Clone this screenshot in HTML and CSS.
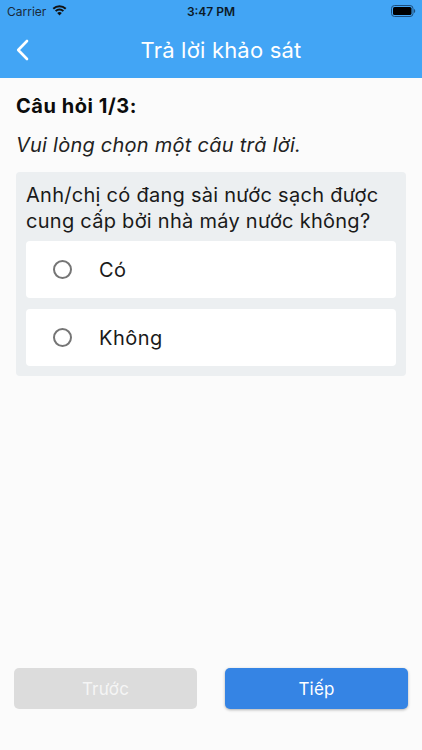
FILE: index.html
```
<!DOCTYPE html>
<html lang="vi">
<head>
<meta charset="utf-8">
<title>Trả lời khảo sát</title>
<link rel="stylesheet" href="styles.css">
</head>
<body>
<div class="app">
  <header class="top">
    <div class="status">
      <div class="status-left">
        <span>Carrier</span>
        <svg class="wifi" viewBox="0 0 16 12" width="15" height="11"><path d="M8 11.500 5.500 8.800a3.500 3.500 0 0 1 5 0Z" fill="#111"/><path d="M3.800 6.700a6 6 0 0 1 8.400 0" fill="none" stroke="#111" stroke-width="2.200"/><path d="M1.200 4a9.800 9.800 0 0 1 13.600 0" fill="none" stroke="#111" stroke-width="2.200"/></svg>
      </div>
      <span class="clock">3:47 PM</span>
      <svg class="battery" viewBox="0 0 25 12" width="25" height="12"><rect x=".5" y=".5" width="21.500" height="11" rx="3" fill="none" stroke="#1d4f7d"/><rect x="2" y="2" width="18.500" height="8" rx="1.600" fill="#000"/><path d="M23 4v4c.8-.2 1.200-1 1.200-2s-.4-1.800-1.200-2Z" fill="#1d4f7d"/></svg>
    </div>
    <div class="nav">
      <svg class="back" viewBox="0 0 14 22" width="14" height="22"><path d="M12 2 3.200 11l8.800 9" fill="none" stroke="#fff" stroke-width="2.600" stroke-linecap="round" stroke-linejoin="round"/></svg>
      <h1>Trả lời khảo sát</h1>
    </div>
  </header>
  <main class="content">
    <h2>Câu hỏi 1/3:</h2>
    <p class="hint">Vui lòng chọn một câu trả lời.</p>
    <section class="card">
      <p class="question">Anh/chị có đang sài nước sạch được cung cấp bởi nhà máy nước không?</p>
      <div class="option"><span class="radio"></span><span>Có</span></div>
      <div class="option"><span class="radio"></span><span>Không</span></div>
    </section>
  </main>
  <footer class="actions">
    <button class="btn prev">Trước</button>
    <button class="btn next">Tiếp</button>
  </footer>
</div>
</body>
</html>
```
FILE: styles.css
```
* { box-sizing: border-box; }
html, body { margin: 0; height: 100%; }
body { font-family: Inter, "Noto Sans", sans-serif; background: #fbfbfb; color: #111; }
.app { width: 422px; height: 750px; display: flex; flex-direction: column; overflow: hidden; }
.top { height: 78px; background: #42a5f5; flex: none; }
.status { height: 22px; padding: 1px 6px 0 7px; display: flex; align-items: center; justify-content: space-between; font-size: 12px; position: relative; }
.status-left { display: flex; align-items: center; gap: 6px; color: #1a2a3a; }
.wifi { margin-top: -2px; }
.clock { position: absolute; left: 0; right: 0; text-align: center; font-weight: 600; color: #0c1a28; }
.battery { position: relative; margin-top: -2px; }
.nav { height: 56px; position: relative; display: flex; align-items: center; justify-content: center; padding-left: 20px; }
.back { position: absolute; left: 14.500px; top: 17px; }
.nav h1 { margin: 0 0 1px; font-size: 22px; font-weight: 400; letter-spacing: .2px; color: #fff; }
.content { flex: 1; padding: 16px 16px 0; }
h2 { margin: 0; font-size: 20px; line-height: 24px; font-weight: 700; letter-spacing: .55px; color: #0c0c0c; }
.hint { margin: 15px 0 0; font-size: 20px; line-height: 24px; font-style: italic; letter-spacing: .24px; color: #222; }
.card { margin-top: 15px; background: #eceff1; border-radius: 4px; padding: 10px; }
.question { margin: 0 0 7px; font-size: 20px; line-height: 26px; letter-spacing: .27px; color: #1a1a1a; }
.option { height: 57px; background: #fff; border-radius: 4px; display: flex; align-items: center; padding-left: 27px; gap: 27px; font-size: 20px; letter-spacing: .5px; color: #1a1a1a; }
.option + .option { margin-top: 11px; }
.radio { width: 19px; height: 19px; border: 2px solid #757575; border-radius: 50%; flex: none; }
.actions { flex: none; height: 82px; padding: 0 14px; display: grid; grid-template-columns: 183px 183px; justify-content: space-between; align-items: start; }
.btn { height: 41px; border: 0; border-radius: 5px; font: 400 17px Inter, "Noto Sans", sans-serif; letter-spacing: .2px; color: #fff; }
.prev { background: #dcdcdc; color: #f5f5f5; }
.next { background: #3584e4; box-shadow: 0 1px 3px rgba(0,0,0,.3); }
```
